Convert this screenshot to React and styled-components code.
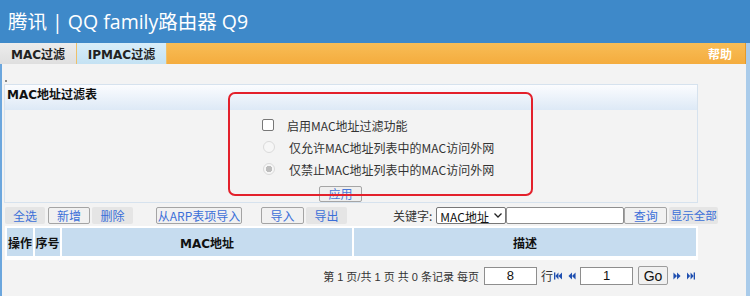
import React from "react";
import styled, { createGlobalStyle } from "styled-components";

const GlobalStyle = createGlobalStyle`
  body {
    margin: 0;
    background: #f3f3f3;
    font-family: "Noto Sans CJK SC", sans-serif;
  }
`;

const Page = styled.div`
  width: 750px;
  height: 296px;
  overflow: hidden;
  display: flex;
  flex-direction: column;
`;

const Header = styled.div`
  height: 43px;
  line-height: 43px;
  padding-left: 8px;
  background: #3e89c9;
  color: #fff;
  font-size: 19.5px;
  font-family: "Open Sans", "Noto Sans CJK SC", sans-serif;
`;

const Frame = styled.div`
  flex: 1;
  display: flex;
  flex-direction: column;
  border-right: 4px solid #a9cbea;
`;

const TabBar = styled.div`
  display: flex;
  height: 21px;
  align-items: stretch;
  background: linear-gradient(#f8bd56, #f4ac3e);
  border-right: 1px solid #e49a2c;
`;

const Tab = styled.div`
  width: ${(p) => p.$w}px;
  display: flex;
  align-items: center;
  justify-content: center;
  font: bold 12px "DejaVu Sans", "Noto Sans CJK SC", sans-serif;
  color: #222;
  background: ${(p) => (p.$active ? "linear-gradient(#ececec, #dfdfdf)" : "linear-gradient(#d7edf9, #c4e2f3)")};
  border-right: 1px solid #eec06a;
`;

const Help = styled.div`
  margin-left: auto;
  padding-right: 13px;
  display: flex;
  align-items: center;
  color: #fff;
  font: bold 12px "Noto Sans CJK SC", sans-serif;
`;

const Content = styled.div`
  position: relative;
  flex: 1;
  background: #f3f3f3;
  border-left: 2px solid #6ba6dd;
  padding: 20px 0 0 2px;
`;

const Tick = styled.span`
  position: absolute;
  left: 3px;
  top: 16px;
  width: 2px;
  height: 2px;
  background: #888;
`;

const Section = styled.div`
  width: 692px;
  border: 1px solid #d6e2ee;
`;

const SectionHead = styled.div`
  height: 25px;
  line-height: 25px;
  padding-left: 2px;
  background: linear-gradient(#fbfcfe, #dde9f6);
  font: bold 12px "DejaVu Sans", "Noto Sans CJK SC", sans-serif;
  color: #111;
`;

const SectionBody = styled.div`
  height: 92px;
  box-sizing: border-box;
  padding: 4px 0 0 255px;
  background: #f3f3f3;
`;

const OptionRow = styled.label`
  display: flex;
  align-items: center;
  height: 22px;
  font-size: 12px;
  color: #333;
`;

const CheckBox = styled.input`
  appearance: none;
  margin: 0 13px 0 2px;
  width: 12px;
  height: 12px;
  border: 1px solid #777;
  border-radius: 2px;
  background: #fff;
  box-sizing: border-box;
`;

const Radio = styled.input`
  appearance: none;
  margin: 0 14px 0 3px;
  width: 12px;
  height: 12px;
  border: 1px solid #dadada;
  border-radius: 50%;
  background: ${(p) => (p.checked ? "radial-gradient(circle, #bdbdbd 0 3px, #f6f6f6 3.5px)" : "#f6f6f6")};
  box-sizing: border-box;
`;

const ApplyButton = styled.button`
  margin: 5px 0 0 59px;
  width: 43px;
  height: 16px;
  padding: 0;
  border: 1px solid #a5a5a5;
  border-radius: 2px;
  background: #efefef;
  color: #4a78d8;
  font: 12px "Noto Sans CJK SC", sans-serif;
  line-height: 14px;
`;

const Annotation = styled.div`
  position: absolute;
  left: 226px;
  top: 28px;
  width: 305px;
  height: 104px;
  box-sizing: border-box;
  border: 2px solid #e3202b;
  border-radius: 7px;
  pointer-events: none;
`;

const Toolbar = styled.div`
  display: flex;
  align-items: center;
  height: 17px;
  margin-top: 4px;
  font-size: 12px;
  white-space: nowrap;
`;

const ToolButton = styled.button`
  flex: none;
  width: ${(p) => p.$w}px;
  height: 17px;
  margin-left: ${(p) => p.$ml || 0}px;
  padding: 0;
  border: 1px solid ${(p) => (p.$framed ? "#a4a4a4" : "transparent")};
  border-radius: 2px;
  background: ${(p) => (p.$framed ? "#f1f1f1" : "#e5e5e5")};
  color: #3b6fd8;
  font: ${(p) => p.$fs || 12}px "Noto Sans CJK SC", sans-serif;
  line-height: 15px;
  white-space: nowrap;
`;

const KeyLabel = styled.span`
  margin-left: 46px;
  color: #333;
`;

const SelectWrap = styled.div`
  position: relative;
  margin-left: 4px;
  width: 70px;
  height: 17px;
`;

const KeySelect = styled.select`
  appearance: none;
  width: 100%;
  height: 100%;
  box-sizing: border-box;
  padding: 0 0 0 3px;
  border: 1px solid #777;
  border-radius: 2px;
  background: #fff;
  font: 12px "Noto Sans CJK SC", sans-serif;
  color: #111;
`;

const Chevron = styled.svg`
  position: absolute;
  right: 4px;
  top: 6px;
  width: 8px;
  height: 5px;
  pointer-events: none;
`;

const KeyInput = styled.input`
  width: 118px;
  height: 17px;
  box-sizing: border-box;
  margin: 0;
  border: 1px solid #8e8e8e;
  border-radius: 2px;
  background: #fff;
`;

const Table = styled.table`
  margin: 2px 0 0 1px;
  width: 693px;
  border-spacing: 2px;
  background: #fff;
`;

const Th = styled.th`
  width: ${(p) => p.$w}px;
  height: 28px;
  padding: 0;
  background: #c6dcef;
  font: bold 12px "DejaVu Sans", "Noto Sans CJK SC", sans-serif;
  color: #111;
`;

const Spacer = styled.td`
  height: 0;
  padding: 0;
`;

const Pager = styled.div`
  width: 691px;
  margin-top: 6px;
  display: flex;
  justify-content: flex-end;
  align-items: center;
  height: 19px;
  font: 11px "Liberation Sans", "Noto Sans CJK SC", sans-serif;
  color: #333;
  white-space: pre;
`;

const RowLabel = styled.span`
  font-size: 12px;
`;

const PageInput = styled.input`
  width: 53px;
  height: 18px;
  box-sizing: border-box;
  margin: 0 4px 0 ${(p) => p.$ml}px;
  border: 1px solid #8e8e8e;
  text-align: center;
  font: 13px "Liberation Sans", sans-serif;
  color: #111;
`;

const GoButton = styled.button`
  width: 30px;
  height: 19px;
  margin-left: 1px;
  padding: 0;
  border: 1px solid #9c9c9c;
  border-radius: 2px;
  background: #f0f0f0;
  font: 14px "Liberation Sans", sans-serif;
  color: #111;
`;

const Arrow = styled.svg`
  width: ${(p) => p.$w}px;
  height: 8px;
  margin-left: ${(p) => p.$ml || 0}px;
  fill: #1f4fb0;
`;

const ArrowIcon = ({ kind, ml }) => {
  const shapes = {
    first: (
      <>
        <rect x="0" y="0" width="1.5" height="8" />
        <polygon points="5,0 1.5,4 5,8" />
        <polygon points="9,0 5,4 9,8" />
      </>
    ),
    prev: (
      <>
        <polygon points="4.5,0 0.5,4 4.5,8" />
        <polygon points="8.5,0 4.5,4 8.5,8" />
      </>
    ),
    next: (
      <>
        <polygon points="0.5,0 4.5,4 0.5,8" />
        <polygon points="4.5,0 8.5,4 4.5,8" />
      </>
    ),
    last: (
      <>
        <polygon points="0,0 3.5,4 0,8" />
        <polygon points="4,0 7.5,4 4,8" />
        <rect x="7.5" y="0" width="1.5" height="8" />
      </>
    ),
  };
  return (
    <Arrow viewBox="0 0 9 8" $w={8} $ml={ml}>
      {shapes[kind]}
    </Arrow>
  );
};

const App = () => {
  return (
    <Page>
      <GlobalStyle />
      <Header>腾讯 | QQ family路由器 Q9</Header>
      <Frame>
        <TabBar>
          <Tab $w={76} $active>MAC过滤</Tab>
          <Tab $w={89}>IPMAC过滤</Tab>
          <Help>帮助</Help>
        </TabBar>
        <Content>
          <Tick />
          <Section>
            <SectionHead>MAC地址过滤表</SectionHead>
            <SectionBody>
              <OptionRow>
                <CheckBox type="checkbox" readOnly />
                启用MAC地址过滤功能
              </OptionRow>
              <OptionRow>
                <Radio type="radio" name="mode" disabled />
                仅允许MAC地址列表中的MAC访问外网
              </OptionRow>
              <OptionRow>
                <Radio type="radio" name="mode" disabled checked readOnly />
                仅禁止MAC地址列表中的MAC访问外网
              </OptionRow>
              <ApplyButton>应用</ApplyButton>
            </SectionBody>
          </Section>
          <Annotation />
          <Toolbar>
            <ToolButton $w={40} $ml={1}>全选</ToolButton>
            <ToolButton $w={42} $ml={3} $framed>新增</ToolButton>
            <ToolButton $w={41} $ml={2}>删除</ToolButton>
            <ToolButton $w={86} $ml={23} $framed>从ARP表项导入</ToolButton>
            <ToolButton $w={43} $ml={19} $framed>导入</ToolButton>
            <ToolButton $w={41} $ml={2}>导出</ToolButton>
            <KeyLabel>关键字:</KeyLabel>
            <SelectWrap>
              <KeySelect defaultValue="mac">
                <option value="mac">MAC地址</option>
              </KeySelect>
              <Chevron viewBox="0 0 8 5">
                <polyline points="0.5,0.5 4,4 7.5,0.5" fill="none" stroke="#222" strokeWidth="1.3" />
              </Chevron>
            </SelectWrap>
            <KeyInput />
            <ToolButton $w={43} $framed>查询</ToolButton>
            <ToolButton $w={49} $ml={2} $fs={11.5}>显示全部</ToolButton>
          </Toolbar>
          <Table>
            <thead>
              <tr>
                <Th $w={26}>操作</Th>
                <Th $w={25}>序号</Th>
                <Th $w={290}>MAC地址</Th>
                <Th $w={342}>描述</Th>
              </tr>
            </thead>
            <tbody>
              <tr>
                <Spacer colSpan={4} />
              </tr>
            </tbody>
          </Table>
          <Pager>
            第 1 页/共 1 页 共 0 条记录 每页
            <PageInput defaultValue="8" $ml={5} />
            <RowLabel>行</RowLabel>
            <ArrowIcon kind="first" ml={1} />
            <ArrowIcon kind="prev" ml={6} />
            <PageInput defaultValue="1" $ml={4} />
            <GoButton>Go</GoButton>
            <ArrowIcon kind="next" ml={5} />
            <ArrowIcon kind="last" ml={6} />
          </Pager>
        </Content>
      </Frame>
    </Page>
  );
};

export default App;
